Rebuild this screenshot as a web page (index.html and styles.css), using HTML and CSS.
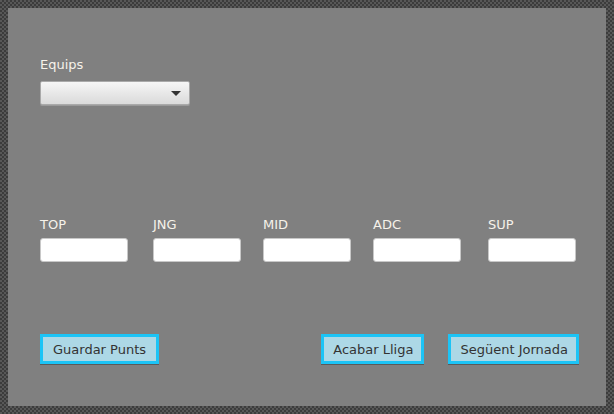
FILE: index.html
```html
<!DOCTYPE html>
<html>
<head>
<meta charset="utf-8">
<link rel="stylesheet" href="styles.css">
</head>
<body>
<div class="panel">
  <div class="team">
    <div class="label">Equips</div>
    <div class="combo"><span class="arrow"></span></div>
  </div>
  <div class="roles">
    <div class="role"><div class="label">TOP</div><div class="field"></div></div>
    <div class="role"><div class="label">JNG</div><div class="field"></div></div>
    <div class="role"><div class="label">MID</div><div class="field"></div></div>
    <div class="role"><div class="label">ADC</div><div class="field"></div></div>
    <div class="role"><div class="label">SUP</div><div class="field"></div></div>
  </div>
  <div class="actions">
    <button class="btn wide">Guardar Punts</button>
    <button class="btn push">Acabar Lliga</button>
    <button class="btn">Següent Jornada</button>
  </div>
</div>
</body>
</html>
```
FILE: styles.css
```css
html, body {
  margin: 0;
  padding: 0;
}
body {
  width: 614px;
  height: 414px;
  padding: 8px 8px 8px 8px;
  box-sizing: border-box;
  background: repeating-conic-gradient(#3c3c3c 0 25%, #585858 0 50%) 0 0 / 4px 4px;
  font-family: "DejaVu Sans", sans-serif;
  font-size: 13px;
}
.panel {
  width: 598px;
  height: 398px;
  background: #808080;
  box-sizing: border-box;
  padding: 49px 27px 0 32px;
  display: flex;
  flex-direction: column;
}
.label {
  color: #f6f2ea;
  font-size: 13px;
  line-height: 16px;
  height: 16px;
}
.team .label {
  margin-bottom: 8px;
}
.combo {
  width: 150px;
  height: 24px;
  box-sizing: border-box;
  border: 1px solid #a9a9a9;
  border-radius: 2px;
  background: linear-gradient(#f6f6f6, #dadada);
  box-shadow: 0 1px 0 #9a9a9a;
  position: relative;
}
.arrow {
  position: absolute;
  right: 8px;
  top: 9px;
  width: 0;
  height: 0;
  border-left: 5px solid transparent;
  border-right: 5px solid transparent;
  border-top: 5px solid #333;
}
.roles {
  margin-top: 112px;
  display: grid;
  grid-template-columns: 113px 110px 110px 115px 88px;
}
.role .label {
  margin-bottom: 5px;
}
.field {
  width: 88px;
  height: 24px;
  box-sizing: border-box;
  background: #fff;
  border: 1px solid #c8c8c8;
  border-radius: 3px;
}
.actions {
  margin-top: 72px;
  display: flex;
  gap: 24px;
}
.btn {
  font-family: "DejaVu Sans", sans-serif;
  font-size: 13px;
  color: #333;
  background: #add8e6;
  border: 3px solid #1cc4f6;
  height: 30px;
  padding: 0 8px 0 9px;
  margin: 0;
  box-shadow: 0 1px 0 #5a5a5a;
}
.wide {
  padding: 0 10px 0 10px;
}
.push {
  margin-left: auto;
}
```
